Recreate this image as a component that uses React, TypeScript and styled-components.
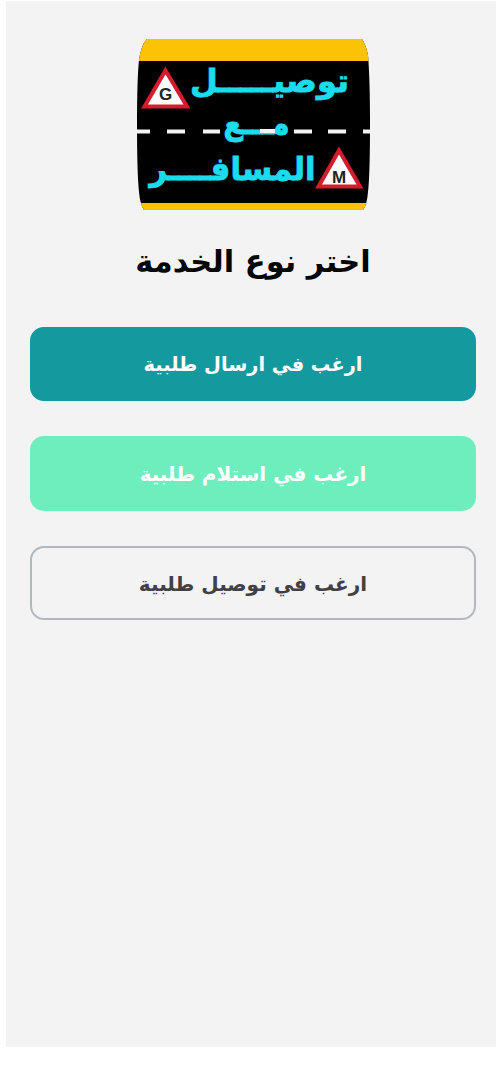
import React from 'react';
import styled, { createGlobalStyle } from 'styled-components';

const GlobalStyle = createGlobalStyle`
  * { box-sizing: border-box; }
  body { margin: 0; background: #fff; font-family: "DejaVu Sans", sans-serif; }
`;

const Screen = styled.main`
  display: flex;
  flex-direction: column;
  align-items: center;
  height: 1046px;
  margin: 1px 0 23px 6px;
  padding: 38px 20px 0 24px;
  background: #f3f3f3;
`;

const Logo = styled.svg`
  display: block;
  flex: none;
  width: 234px;
  height: 171px;
`;

const Title = styled.h1`
  margin: 28px 0 0;
  height: 48px;
  line-height: 48px;
  font-size: 30.5px;
  font-weight: 700;
  color: #060606;
  white-space: nowrap;
`;

const Options = styled.div`
  display: flex;
  flex-direction: column;
  gap: 35px;
  width: 100%;
  margin-top: 40.5px;
`;

const kinds = {
  teal: { bg: '#14999f', fg: '#fff', line: '#14999f', size: 19.4 },
  mint: { bg: '#6feebd', fg: '#fff', line: '#6feebd', size: 19.95 },
  plain: { bg: 'transparent', fg: '#424042', line: '#b0babd', size: 20 },
};

const Option = styled.button<{ $kind: keyof typeof kinds }>`
  height: 74.5px;
  padding: 2px 0 0;
  border: 2px solid ${(p) => kinds[p.$kind].line};
  border-radius: 14px;
  background: ${(p) => kinds[p.$kind].bg};
  color: ${(p) => kinds[p.$kind].fg};
  font: 700 ${(p) => kinds[p.$kind].size}px "DejaVu Sans", sans-serif;
  white-space: nowrap;
`;

const Lettering = styled.text`
  fill: #19dced;
  stroke: #19dced;
  stroke-width: 0.9px;
  font: 700 32px "DejaVu Sans", sans-serif;
  direction: rtl;
  text-anchor: middle;
`;

const SignLetter = styled.text`
  fill: #222;
  font: 700 17px "Liberation Sans", sans-serif;
  text-anchor: middle;
`;

export default function App() {
  return (
    <>
      <GlobalStyle />
      <Screen dir="rtl">
        <Logo viewBox="0 0 234 171" direction="ltr">
          <defs>
            <clipPath id="badge">
              <path d="M11 0H226Q230 6 232 16Q234 40 234 85Q234 135 232 153Q231 166 227 171H8Q4 165 3 153Q1 135 1 85Q1 40 3 21Q5 6 11 0Z" />
            </clipPath>
          </defs>
          <g clipPath="url(#badge)">
            <rect width="234" height="171" fill="#000" />
            <rect width="234" height="22" fill="#fbc206" />
            <rect y="164" width="234" height="8" fill="#fbc206" />
            <path d="M0 92.5H14M31 92.5H49M67 92.5H84M158 92.5H176M192 92.5H210M227 92.5H234" stroke="#f4f2f2" strokeWidth="4" />
            <Lettering x="133.5" y="52.5" textLength="159" lengthAdjust="spacingAndGlyphs">توصيـــــل</Lettering>
            <Lettering x="120.5" y="94.5" textLength="66" lengthAdjust="spacingAndGlyphs">مـــع</Lettering>
            <path d="M124 92H139" stroke="#f4f2f2" strokeWidth="4" />
            <Lettering x="96.5" y="141" textLength="166" lengthAdjust="spacingAndGlyphs">المسافــــر</Lettering>
            <path d="M29.5 31.5L51 67.5H8.5Z" fill="#fff" stroke="#d61c2c" strokeWidth="4" />
            <SignLetter x="29.5" y="61">G</SignLetter>
            <path d="M203 111.5L224 147.5H182.5Z" fill="#fff" stroke="#d61c2c" strokeWidth="4" />
            <SignLetter x="203" y="143.5">M</SignLetter>
          </g>
        </Logo>
        <Title>اختر نوع الخدمة</Title>
        <Options>
          <Option $kind="teal">ارغب في ارسال طلبية</Option>
          <Option $kind="mint">ارغب في استلام طلبية</Option>
          <Option $kind="plain">ارغب في توصيل طلبية</Option>
        </Options>
      </Screen>
    </>
  );
}
